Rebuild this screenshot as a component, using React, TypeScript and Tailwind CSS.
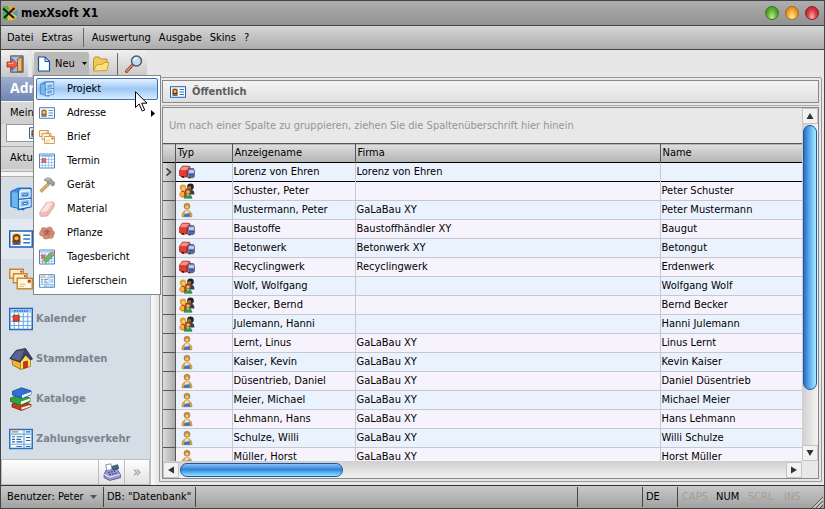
import { useState } from "react";
import type { ReactNode } from "react";

type IconProps = { className?: string };

function Svg({ className = "size-4", box = 16, children }: IconProps & { box?: number; children: ReactNode }) {
  return (
    <svg className={`${className} shrink-0`} viewBox={`0 0 ${box} ${box}`} fill="none" aria-hidden="true">
      {children}
    </svg>
  );
}

function CabinetIcon({ className }: IconProps) {
  return (
    <Svg className={className}>
      <path d="M1.200 3 6 .7h8.500L10 2.800V15.300L1.200 13z" fill="#3d8fe0" stroke="#1c62b5" strokeWidth=".6" />
      <path d="M2 3.300 6.200 4v10L2 12.800z" fill="#6fb5f0" />
      <path d="M6.300 2.500 7.500 1h7.200v12.200l-8.400 1.900z" fill="#bfe2fb" stroke="#1c62b5" strokeWidth=".8" />
      <path d="M7.300 3.200 14 2.500v4.300l-6.700.8zM7.300 8.900 14 8.100v4.400l-6.700 1.300z" fill="#8cc6f5" stroke="#fff" strokeWidth=".6" />
      <path d="M6.300 8.300 14.700 7.400" stroke="#1c62b5" strokeWidth=".8" />
      <path d="m9.300 4.800 3-.3v1.200l-3 .3zM9.300 10.500l3-.4v1.200l-3 .5z" fill="#fff" stroke="#1f5aa0" strokeWidth=".6" />
    </Svg>
  );
}

function CardIcon({ className }: IconProps) {
  return (
    <Svg className={className}>
      <path d="M.5 2.700h15v10.600H.5z" fill="#f6fbff" stroke="#1d60b8" />
      <path d="M2 4.200h6v7.600H2z" fill="#ffd87a" />
      <path d="M2.500 9V6.500C2.500 4 7.500 4 7.500 6.500V9l.5 1.500H2z" fill="#7a3d13" />
      <circle cx="5" cy="7.500" r="1.400" fill="#f3b976" />
      <path d="M2.200 11.800c.5-2.200 5.100-2.200 5.600 0z" fill="#28568e" />
      <path d="M9.500 5.500H14M9.500 8H14M9.500 10.500H14" stroke="#2f75c8" />
    </Svg>
  );
}

function LettersIcon({ className }: IconProps) {
  return (
    <Svg className={className}>
      <path d="M.5 1.500h9v6h-9z" fill="#fff0cc" stroke="#c78835" />
      <path d="M3 4.500h9v6H3z" fill="#fff0cc" stroke="#c78835" />
      <path d="M5.500 7.500h10v7h-10z" fill="#fff7e2" stroke="#c78835" />
      <path d="M7 11.500h4M7 13h3" stroke="#deb87a" strokeWidth=".8" />
      <path d="M12.500 8.500h2v2h-2z" fill="#d43a20" />
      <path d="M7.500 2.500h1.200v1.200H7.500zM10 5.500h1.200v1.200H10z" fill="#d43a20" />
    </Svg>
  );
}

function CalendarIcon({ className }: IconProps) {
  return (
    <Svg className={className}>
      <path d="M.5 1h15v14H.5z" fill="#fff" stroke="#2467b8" />
      <path d="M1 1.500h14v2.300H1z" fill="#8fc4f4" />
      <path d="M3.500 2.700h9" stroke="#2b6fbf" strokeDasharray="1 .6" />
      <path d="M1 6.500h14M1 9.500h14M1 12.300h14M3.500 4v11M6.500 4v11M9.500 4v11M12.500 4v11" stroke="#67a8e6" strokeWidth=".7" />
      <path d="M2.800 5.500h4v4h-4z" fill="#e0452b" stroke="#8f2515" strokeWidth=".5" />
    </Svg>
  );
}

function HammerIcon({ className }: IconProps) {
  return (
    <Svg className={className}>
      <path d="M9 5.500.800 13.300 2.700 15.500 11 7.500z" fill="#d9973f" stroke="#8c561d" strokeWidth=".6" />
      <path d="M5 3C7.500.2 10.500.5 12.300 2l1.200 2 2.200 1.500-.5 2.700-2.200.8-1.500-2.500L9.500 7 7.500 4.200z" fill="#8a8785" stroke="#55504c" strokeWidth=".6" />
      <path d="M7 2.800c1.500-1.200 3-1 4.300 0" stroke="#d9d9d9" strokeWidth=".8" />
    </Svg>
  );
}

function MaterialIcon({ className }: IconProps) {
  return (
    <Svg className={className}>
      <path d="M7.500 1.500 14 .8l1.500 1.700-.5 3.500-6.500 9-6.500.5-1.300-2 .3-2.500z" fill="#eeb0a8" stroke="#c08077" strokeWidth=".7" />
      <path d="m8 1.800 6-.4-6.300 9.300-6.300.5z" fill="#fcdad5" />
      <path d="m7.700 10.800.8 3.500" stroke="#d59a92" strokeWidth=".7" />
    </Svg>
  );
}

function FlowerIcon({ className }: IconProps) {
  return (
    <Svg className={className}>
      <g fill="#cf7352" stroke="#9a4a34" strokeWidth=".5">
        <ellipse cx="5" cy="5" rx="3" ry="2.500" />
        <ellipse cx="10.500" cy="4.500" rx="3" ry="2.500" />
        <ellipse cx="13" cy="8" rx="2.500" ry="2.500" />
        <ellipse cx="11.500" cy="11" rx="3" ry="2.500" />
        <ellipse cx="7" cy="12" rx="3" ry="2" />
        <ellipse cx="3.200" cy="8.500" rx="2.700" ry="2.700" />
      </g>
      <circle cx="8" cy="7.800" r="3.500" fill="#b8583f" />
      <path d="M5.500 7c1-1.500 3.500-2 5 0M8 5v4M6 9.500l4-3" stroke="#7b2f22" strokeWidth=".8" />
    </Svg>
  );
}

function ReportIcon({ className }: IconProps) {
  return (
    <Svg className={className}>
      <path d="M.5 1h15v14H.5z" fill="#eef7ff" stroke="#2467b8" />
      <path d="M1 1.500h14v2H1z" fill="#8fc4f4" />
      <path d="M1 6.500h14M1 9.500h14M1 12.300h14M3.500 4v11M6.500 4v11M9.500 4v11M12.500 4v11" stroke="#67a8e6" strokeWidth=".7" />
      <path d="M2 5.500h4v4H2z" fill="#e0452b" />
      <path d="m4 11 7.500-7.500L14.700 6.500l-8 7.700-3.200.8z" fill="#4ba545" stroke="#23682a" strokeWidth=".6" />
      <path d="m11.500 3.500 1.500-1.500 3 2.700L14.700 6.500z" fill="#e86a4a" />
      <path d="m4 11 2.700 3.200-3.200.8z" fill="#f3c894" />
    </Svg>
  );
}

function FormIcon({ className }: IconProps) {
  return (
    <Svg className={className}>
      <path d="M.5 1.700h15v12.600H.5z" fill="#f8fcff" stroke="#2d70bd" />
      <path d="M10 2v12M1 4.700h14M1 11.500h14" stroke="#6aa9e3" strokeWidth=".8" />
      <path d="M1.800 3.200h4.500" stroke="#e79b4b" strokeWidth="1.200" />
      <path d="M11.300 3.200h3M2 6.500h2M5 6.500h4M2 8.200h2M5 8.200h3M2 9.900h2M5 9.900h4M11.300 7h3M11.300 9h3M5 13h3.500M11.300 13h3" stroke="#2b65a8" strokeWidth=".8" />
    </Svg>
  );
}

function HouseIcon({ className }: IconProps) {
  return (
    <Svg className={className} box={24}>
      <path d="M3 11.500 12 9v13.500L3.500 18z" fill="#f0b52c" stroke="#8a6414" strokeWidth=".8" />
      <path d="M11.500 14.500 17 8l4.500 5v6.500l-10 3z" fill="#ffe04f" stroke="#9c7419" strokeWidth=".7" />
      <path d="M14.500 15 18.500 14v6.200l-4 1.300z" fill="#d0311c" stroke="#811d10" strokeWidth=".6" />
      <path d="M.8 11.500 7 3.500l9.500-2 7 10.500-1.800 1-5.200-5.300-5.500 7.500z" fill="#3e4368" stroke="#1f2345" strokeWidth=".8" />
      <path d="M2 11.200 7.500 4.300l8-1.600-4.700 11z" fill="#5d648f" />
    </Svg>
  );
}

function BooksIcon({ className }: IconProps) {
  return (
    <Svg className={className} box={24}>
      <path d="m3 17 10-3 9 3.500v2L12.500 23.500 3 20z" fill="#c93822" stroke="#74180d" strokeWidth=".7" />
      <path d="m12.500 20.500 9-2.500v1.500l-9 3.200z" fill="#fff3e6" />
      <path d="m1.500 11 9-3 10.500 3v3.500l-9.500 4-10-4z" fill="#2fa33c" stroke="#125f1d" strokeWidth=".7" />
      <path d="m12 14.500 9-3v2l-9 4z" fill="#f3fff0" />
      <path d="m3.500 4.200 9-3.400 9.500 3v3.700l-9 4L3.500 8z" fill="#2f6fd0" stroke="#123e8a" strokeWidth=".7" />
      <path d="m13 8.200 9-3.200v2.200l-9 4z" fill="#f2f8ff" />
    </Svg>
  );
}

function RegisterIcon({ className }: IconProps) {
  return (
    <Svg className={className}>
      <path d="m1 10 2-4 9-1 3.500 5v3L6 15.500 1 13z" fill="#9a9ad2" stroke="#47477e" strokeWidth=".7" />
      <path d="m1 10 5 2.500 9.500-2.500" stroke="#dcdcf5" />
      <path d="M2.500 1.500 7 .8l1 5-4.500 1z" fill="#fff" stroke="#5e5e8c" strokeWidth=".6" />
      <path d="m8 3 5-1.500L14 5 9 6z" fill="#41668c" stroke="#28324f" strokeWidth=".6" />
      <path d="m4.500 8.500 7-1.500M5.500 10.300l7.500-1.500" stroke="#3b3b6b" strokeDasharray="1.500 1" />
    </Svg>
  );
}

function TruckIcon() {
  return (
    <Svg>
      <path d="M.3 6.500 3.500 2l7 .3 1 2.500-2 8-5 .5L.3 11.500z" fill="#e53c2b" stroke="#8f1c14" strokeWidth=".6" />
      <path d="M1 6 3.800 2.600l6.200.3L7.500 6.300z" fill="#f6948a" />
      <path d="M7.500 6.300V12.800" stroke="#a3241a" strokeWidth=".6" />
      <path d="M8.500 6.500 10.500 4.500h4l1.200 2.500v5l-1.500 1.700H9.500l-1-1z" fill="#6f7fb4" stroke="#343d68" strokeWidth=".6" />
      <path d="M10 6.300h5v2.500h-5z" fill="#c3d6f2" />
      <path d="M10 10.500h5M10 12h5" stroke="#343d68" strokeWidth=".7" />
      <path d="M2 12h3v1.800H3zM9.500 13h2v1.300h-2z" fill="#2c2424" />
    </Svg>
  );
}

function GroupIcon() {
  return (
    <Svg>
      <circle cx="11.500" cy="3.700" r="3.300" fill="#222227" />
      <circle cx="10.500" cy="4.800" r="1.800" fill="#a86b38" />
      <path d="M8.500 10c0-4.500 6.800-4.500 6.800 0v1.500H8.500z" fill="#353c58" />
      <circle cx="4" cy="4.800" r="3.200" fill="#dfa623" />
      <circle cx="4.500" cy="5.500" r="1.700" fill="#f4c98a" />
      <path d="M.5 12.500C0 6.500 7 6.500 7.500 11v2.500L3 14.500z" fill="#d63b22" />
      <path d="M1.200 9H5v4.500H1.200z" fill="#f0b729" />
      <circle cx="9" cy="8.300" r="3" fill="#8b4c16" />
      <circle cx="9" cy="9" r="1.700" fill="#efb271" />
      <path d="M5.200 15.300c0-5 7.800-5 7.800 0z" fill="#2fa03c" stroke="#17661f" strokeWidth=".5" />
      <path d="m8 11.500 1 1.500 1-1.500z" fill="#fff" />
    </Svg>
  );
}

function PersonIcon() {
  return (
    <Svg>
      <circle cx="8" cy="4.200" r="3" fill="#cb8f33" stroke="#8f651f" strokeWidth=".5" />
      <circle cx="8" cy="5" r="1.600" fill="#f2c68d" />
      <path d="M3 14.800C2.500 6 13.500 6 13 14.800z" fill="#e3a538" stroke="#a8741d" strokeWidth=".5" />
      <path d="M6.500 8.500h3l.8 3.500H5.700z" fill="#f1dfc0" />
      <path d="m5.500 12 5-1 .8 3.800H4.700z" fill="#3278cf" />
    </Svg>
  );
}

function LogoIcon() {
  return (
    <Svg>
      <path d="M1 1h7L5.500 8 8 15H1z" fill="#4fb04c" />
      <path d="M5.500.8h5.300l4.500 4V8L11 9z" fill="#f2a43a" />
      <path d="M5 8 11 7.500 15.300 8v3.300l-4.500 4H6z" fill="#e8c53c" />
      <path d="m10 8 5.700-3.500v7.500z" fill="#4c9ad0" />
      <path d="m1 3.500 11 9.500M12.500 3 2 13" stroke="#1c1c1c" strokeWidth="2.200" />
    </Svg>
  );
}

function DoorIcon() {
  return (
    <Svg className="size-[18px]" box={18}>
      <path d="M4.500.8h12.700v16.500H4.500z" fill="#5c9fe0" stroke="#8f5f3f" />
      <path d="M6 2h7v14H6z" fill="#8fc6f7" />
      <path d="m11.500 4 4.500-2v14l-4.500.8z" fill="#f4b765" stroke="#7a4630" strokeWidth=".8" />
      <path d="M1 7h5V3.700L12 9.500 6 15.200V12H1z" fill="#ef5b45" stroke="#a02d1f" strokeWidth=".8" />
      <path d="M2 8.300h5V6.500" stroke="#fbb3a6" />
    </Svg>
  );
}

function FileIcon() {
  return (
    <Svg>
      <path d="M2.500 1h6.500l4.500 4.500V15h-11z" fill="#fafdff" stroke="#1e4f9e" strokeWidth="1.200" />
      <path d="M9 1v4.500h4.500z" fill="#b5d7f7" stroke="#1e4f9e" />
    </Svg>
  );
}

function FolderIcon() {
  return (
    <Svg className="size-[18px]" box={18}>
      <path d="M1.500 16V4l1.500-2h4l1.500 2H15v5" fill="#f2c657" stroke="#c2932d" />
      <path d="m1.500 16 3-6L11 9l1-1.500h5L15 15.500z" fill="#fbdf82" stroke="#c9992f" strokeWidth=".9" />
    </Svg>
  );
}

function SearchIcon() {
  return (
    <Svg className="size-[18px]" box={18}>
      <path d="m1.500 16.500 6-6.500" stroke="#8f3528" strokeWidth="3" strokeLinecap="round" />
      <path d="m1.700 16.200 6-6.400" stroke="#ea8a78" strokeWidth="1.500" strokeLinecap="round" />
      <circle cx="11.500" cy="6" r="5" fill="#c3daf4" stroke="#56596a" strokeWidth="1.500" />
      <path d="M8.800 5.500c.5-1.800 2-2.500 3.500-2.300" stroke="#fff" strokeWidth="1.400" />
    </Svg>
  );
}

const menuItems = [
  { label: "Projekt", Icon: CabinetIcon },
  { label: "Adresse", Icon: CardIcon, submenu: true },
  { label: "Brief", Icon: LettersIcon },
  { label: "Termin", Icon: CalendarIcon },
  { label: "Gerät", Icon: HammerIcon },
  { label: "Material", Icon: MaterialIcon },
  { label: "Pflanze", Icon: FlowerIcon },
  { label: "Tagesbericht", Icon: ReportIcon },
  { label: "Lieferschein", Icon: FormIcon },
];

const navItems = [
  { id: "projekt", label: "", Icon: CabinetIcon },
  { id: "adresse", label: "", Icon: CardIcon, active: true },
  { id: "brief", label: "", Icon: LettersIcon },
  { id: "kalender", label: "Kalender", Icon: CalendarIcon },
  { id: "stammdaten", label: "Stammdaten", Icon: HouseIcon },
  { id: "kataloge", label: "Kataloge", Icon: BooksIcon },
  { id: "zahlung", label: "Zahlungsverkehr", Icon: FormIcon },
];

const typeIcons = { truck: TruckIcon, group: GroupIcon, person: PersonIcon };

const rows: Array<{ type: keyof typeof typeIcons; display: string; company: string; name: string }> = [
  { type: "truck", display: "Lorenz von Ehren", company: "Lorenz von Ehren", name: "" },
  { type: "group", display: "Schuster, Peter", company: "", name: "Peter Schuster" },
  { type: "person", display: "Mustermann, Peter", company: "GaLaBau XY", name: "Peter Mustermann" },
  { type: "truck", display: "Baustoffe", company: "Baustoffhändler XY", name: "Baugut" },
  { type: "truck", display: "Betonwerk", company: "Betonwerk XY", name: "Betongut" },
  { type: "truck", display: "Recyclingwerk", company: "Recyclingwerk", name: "Erdenwerk" },
  { type: "group", display: "Wolf, Wolfgang", company: "", name: "Wolfgang Wolf" },
  { type: "group", display: "Becker, Bernd", company: "", name: "Bernd Becker" },
  { type: "group", display: "Julemann, Hanni", company: "", name: "Hanni Julemann" },
  { type: "person", display: "Lernt, Linus", company: "GaLaBau XY", name: "Linus Lernt" },
  { type: "person", display: "Kaiser, Kevin", company: "GaLaBau XY", name: "Kevin Kaiser" },
  { type: "person", display: "Düsentrieb, Daniel", company: "GaLaBau XY", name: "Daniel Düsentrieb" },
  { type: "person", display: "Meier, Michael", company: "GaLaBau XY", name: "Michael Meier" },
  { type: "person", display: "Lehmann, Hans", company: "GaLaBau XY", name: "Hans Lehmann" },
  { type: "person", display: "Schulze, Willi", company: "GaLaBau XY", name: "Willi Schulze" },
  { type: "person", display: "Müller, Horst", company: "GaLaBau XY", name: "Horst Müller" },
];

function ArrowButton({ label, path }: { label: string; path: string }) {
  return (
    <button
      type="button"
      aria-label={label}
      className="flex size-4 shrink-0 items-center justify-center border border-[#c4c4c4] bg-[#f2f2f2]"
    >
      <svg className="size-2" viewBox="0 0 8 8" aria-hidden="true">
        <path d={path} fill="#333" />
      </svg>
    </button>
  );
}

function NewMenu() {
  const [active, setActive] = useState("Projekt");

  return (
    <div
      role="menu"
      className="absolute top-full -left-px z-20 w-32 border border-[#858585] bg-white p-px"
    >
      {menuItems.map(({ label, Icon, submenu }) => (
        <button
          key={label}
          type="button"
          role="menuitem"
          onMouseEnter={() => setActive(label)}
          className="relative flex h-6 w-full items-center p-px text-left"
        >
          <span
            className={
              active === label
                ? "flex h-full w-full items-center gap-3 rounded-xs border border-[#3f6fb0] bg-linear-to-b from-[#e4f1fe] via-[#9cc8f5] to-[#d9ecff] px-0.5"
                : "flex h-full w-full items-center gap-3 border border-transparent px-0.5"
            }
          >
            <Icon className="size-4 opacity-80" />
            {label}
          </span>
          {submenu && (
            <svg className="absolute right-1 h-[7px] w-1" viewBox="0 0 4 7" aria-hidden="true">
              <path d="M0 0v7l4-3.500z" fill="#000" />
            </svg>
          )}
        </button>
      ))}
      {/* mouse pointer */}
      <svg className="absolute top-[15px] left-[101px] h-[21px] w-[13px]" viewBox="0 0 13 21" aria-hidden="true">
        <path
          d="M.5.800v15.700l3.700-3.500 3 7 2.500-1-3-6.800h5.300z"
          fill="#fff"
          stroke="#000"
        />
      </svg>
    </div>
  );
}

function Sidebar() {
  return (
    <aside className="flex w-[150px] shrink-0 flex-col border-r border-[#b9bec5] bg-[#d5dde6]">
      <h2 className="h-6 shrink-0 bg-linear-to-b from-[#a0afd0] to-[#6f84b4] pl-[9px] font-['Open_Sans',sans-serif] text-sm leading-[22px] font-bold text-white">
        Adresse
      </h2>
      <div className="flex h-[78px] shrink-0 flex-col bg-[#dcdcdc]">
        <button type="button" className="h-[23px] border-t border-[#f8f8f8] bg-linear-to-b from-[#d9d9d9] to-[#cfcfcf] pl-[9px] text-left">
          Meine
        </button>
        <button type="button" aria-label="Öffentlich" className="mx-[5px] flex h-[18px] items-center border border-[#999] bg-white pl-[22px]">
          <CardIcon className="size-4" />
        </button>
        <button type="button" className="mt-1 h-[23px] border-t border-[#aaa] bg-linear-to-b from-[#d9d9d9] to-[#c9c9c9] pl-[9px] text-left">
          Aktuell
        </button>
        <div className="mt-0.5 h-[6px] border-y border-[#b0b0b0] bg-[#f6f6f6]" />
      </div>
      <nav className="flex min-h-0 flex-1 flex-col overflow-hidden">
        {navItems.map(({ id, label, Icon, active }) => (
          <a
            key={id}
            href={`#${id}`}
            className={
              active
                ? "flex h-10 shrink-0 items-center gap-[3px] bg-[#e2e8ef] pl-2 font-bold text-[#7b848d]"
                : "flex h-10 shrink-0 items-center gap-[3px] pl-2 font-bold text-[#7b848d]"
            }
          >
            <Icon className="size-6" />
            {label}
          </a>
        ))}
      </nav>
      <div className="flex h-[26px] shrink-0 border border-[#c0c0c0] bg-linear-to-b from-white to-[#e2e2e2]">
        <span className="flex-1" />
        <button type="button" aria-label="Kasse" className="flex w-[26px] items-center justify-center border-l border-[#bdbdbd]">
          <RegisterIcon className="size-[18px]" />
        </button>
        <button type="button" className="w-[25px] border-l border-[#bdbdbd] text-base text-[#999]">
          »
        </button>
      </div>
    </aside>
  );
}

function AddressTable() {
  return (
    <table className="w-full table-fixed border-collapse">
      <colgroup>
        <col className="w-3" />
        <col className="w-[57px]" />
        <col className="w-[123px]" />
        <col />
        <col className="w-[142px]" />
      </colgroup>
      <thead>
        <tr className="h-[19px] border-t border-b border-t-[#555] border-b-black bg-linear-to-b from-[#dedede] to-[#b4b4b4] text-left">
          <th className="border-r border-[#555] p-0" aria-label="Zeile" />
          {["Typ", "Anzeigename", "Firma", "Name"].map((title) => (
            <th key={title} className="border-r border-[#555] p-0 pl-0.5 font-normal last:border-r-0">
              {title}
            </th>
          ))}
        </tr>
      </thead>
      <tbody>
        {rows.map((row, index) => {
          const TypeIcon = typeIcons[row.type];
          return (
            <tr
              key={row.display}
              className={
                index === 0
                  ? "h-[19px] border-b border-black bg-[#eaf2fd]"
                  : "h-[19px] border-b border-[#c6c8d2] odd:bg-[#eaf2fd] even:bg-[#f7f3fd]"
              }
            >
              <td className="border-r border-b border-[#555] bg-linear-to-r from-[#dcdcdc] to-[#ababab] p-0">
                {index === 0 && (
                  <svg className="mx-auto h-2 w-[7px]" viewBox="0 0 7 8" fill="none" aria-hidden="true">
                    <path d="m1.500.5 4 3.500-4 3.500" stroke="#333" strokeWidth="1.500" />
                  </svg>
                )}
              </td>
              <td className="border-r border-r-[#c6c8d2] p-0 pl-[3px]">
                <TypeIcon />
              </td>
              <td className="truncate border-r border-r-[#c6c8d2] p-0 pl-px">{row.display}</td>
              <td className="truncate border-r border-r-[#c6c8d2] p-0 pl-px">{row.company}</td>
              <td className="truncate p-0 pl-px">{row.name}</td>
            </tr>
          );
        })}
      </tbody>
    </table>
  );
}

function AddressGrid() {
  return (
    <div className="flex min-h-0 flex-1 flex-col border border-[#888]">
      <div className="flex min-h-0 flex-1">
        <div className="min-w-0 flex-1 overflow-hidden">
          <p className="flex h-[35px] items-center pl-1.5 text-[#959595]">
            Um nach einer Spalte zu gruppieren, ziehen Sie die Spaltenüberschrift hier hinein
          </p>
          <AddressTable />
        </div>
        <div className="flex w-4 shrink-0 flex-col bg-linear-to-r from-[#cfcfcf] to-[#f4f4f4]">
          <ArrowButton label="Nach oben" path="M4 1 7.500 7h-7z" />
          <div className="flex min-h-0 flex-1 flex-col py-px">
            <div className="mx-px h-[83%] rounded-full border border-[#24559b] bg-linear-to-r from-[#2c6fc4] via-[#63b0f2] via-50% to-[#a8ecff]" />
          </div>
          <ArrowButton label="Nach unten" path="M4 7 7.500 1h-7z" />
        </div>
      </div>
      <div className="flex h-[17px] shrink-0">
        <div className="flex min-w-0 flex-1 items-center bg-linear-to-b from-[#cfcfcf] to-[#f2f2f2]">
          <ArrowButton label="Nach links" path="M1 4 7 .500v7z" />
          <div className="min-w-0 flex-1 px-px">
            <div className="h-3.5 w-[27%] rounded-full border border-[#24559b] bg-linear-to-b from-[#8cc4f4] via-[#2f80dc] via-45% to-[#90e4ff]" />
          </div>
          <ArrowButton label="Nach rechts" path="M7 4 1 .500v7z" />
        </div>
        <div className="w-4 shrink-0 bg-[#e8e8e8]" />
      </div>
    </div>
  );
}

function Toolbar() {
  const [open, setOpen] = useState(true);

  return (
    <div className="flex h-[27px] shrink-0 bg-[#e7e7e7]">
      <div className="flex w-[27px] items-center justify-center bg-linear-to-b from-[#f0f0f0] to-[#c8c8c8]">
        <button type="button" aria-label="Beenden">
          <DoorIcon />
        </button>
      </div>
      <div className="ml-1 flex w-[115px] items-center bg-linear-to-b from-[#f0f0f0] to-[#c8c8c8] pl-0.5">
        <div className="relative">
          <button
            type="button"
            onClick={() => setOpen(!open)}
            className="flex h-[23px] w-[55px] items-center rounded-xs bg-[#b9b9b9] pl-0.5"
          >
            <FileIcon />
            <span className="ml-[3px]">Neu</span>
            <svg className="ml-[7px] h-[3px] w-[5px]" viewBox="0 0 5 3" aria-hidden="true">
              <path d="M0 0h5L2.500 3z" fill="#000" />
            </svg>
          </button>
          {open && <NewMenu />}
        </div>
        <button type="button" aria-label="Öffnen" className="ml-[3px]">
          <FolderIcon />
        </button>
        <span className="mx-[7px] h-[22px] w-px bg-[#666]" />
        <button type="button" aria-label="Suchen">
          <SearchIcon />
        </button>
      </div>
    </div>
  );
}

function StatusBar() {
  return (
    <footer className="flex h-[23px] shrink-0 items-center border-t border-[#333] bg-linear-to-b from-[#c9c9c9] to-[#a2a2a2]">
      <button type="button" className="flex h-5 w-[103px] items-center justify-between border-r border-[#444] px-1.5">
        Benutzer: Peter
        <svg className="h-1 w-[7px]" viewBox="0 0 7 4" aria-hidden="true">
          <path d="M0 0h7L3.500 4z" fill="#555" />
        </svg>
      </button>
      <span className="flex h-5 w-[92px] items-center border-r border-[#444] pl-[3px] whitespace-nowrap">DB: "Datenbank"</span>
      <span className="h-5 flex-1 border-r border-[#444]" />
      <span className="h-5 w-[65px] border-r border-[#444]" />
      <span className="flex h-5 w-[35px] items-center border-r border-[#444] pl-[3px]">DE</span>
      <span className="w-[38px] pl-1 text-[#a59f94]">CAPS</span>
      <span className="w-8">NUM</span>
      <span className="w-9 text-[#a59f94]">SCRL</span>
      <span className="w-[27px] text-[#a59f94]">INS</span>
      <svg className="mr-px size-3 self-end" viewBox="0 0 12 12" aria-hidden="true">
        <path d="M1 12 12 1M5 12l7-7M9 12l3-3" stroke="#555" />
        <path d="M2.500 12 12 2.500M6.500 12 12 6.500" stroke="#eee" />
      </svg>
    </footer>
  );
}

export default function App() {
  return (
    <div className="flex h-screen flex-col overflow-hidden border border-[#444] bg-[#e8e8e8] font-['DejaVu_Sans_Condensed','DejaVu_Sans',sans-serif] text-[11px] leading-[14px] text-black">
      <header className="flex h-[25px] shrink-0 items-center border-b border-[#444] bg-linear-to-b from-[#aeaeae] to-[#929292] pl-px">
        <LogoIcon />
        <h1 className="ml-[3px] flex-1 text-xs font-bold">mexXsoft X1</h1>
        <div className="flex gap-1.5 pr-[5px]">
          <button type="button" aria-label="Minimieren" className="size-3.5 rounded-full border border-[#3e7520] bg-radial-[at_50%_85%] from-[#b6f58a] via-[#62b536] to-[#35761a]" />
          <button type="button" aria-label="Maximieren" className="size-3.5 rounded-full border border-[#a66a18] bg-radial-[at_50%_85%] from-[#fff08a] via-[#f4aa35] to-[#b8661a]" />
          <button type="button" aria-label="Schließen" className="size-3.5 rounded-full border border-[#8f2026] bg-radial-[at_50%_85%] from-[#ffb0b0] via-[#dc3d46] to-[#8c1820]" />
        </div>
      </header>

      <nav className="flex h-6 shrink-0 items-center border-b border-[#444] bg-linear-to-b from-[#d6d6d6] to-[#acacac] pl-1.5">
        <button type="button">Datei</button>
        <button type="button" className="ml-2">Extras</button>
        <span className="mr-1.5 ml-2.5 h-[19px] w-px bg-[#666]" />
        <button type="button" className="ml-0.5">Auswertung</button>
        <button type="button" className="ml-2">Ausgabe</button>
        <button type="button" className="ml-2">Skins</button>
        <button type="button" className="ml-2">?</button>
      </nav>

      <Toolbar />

      <div className="flex min-h-0 flex-1">
        <Sidebar />
        <div className="w-2 shrink-0 bg-linear-to-r from-[#fafafa] to-[#e4e4e4]" />
        <main className="mr-0.5 mb-[3px] flex min-w-0 flex-1 flex-col rounded-t-xs border border-[#999] p-0.5">
          <div className="flex h-[23px] shrink-0 items-center gap-1.5 border border-[#888] bg-linear-to-b from-[#f4f4f4] to-[#dfdfdf] pl-[7px]">
            <CardIcon className="size-4" />
            <h2 className="font-bold text-[#5c5c5c]">Öffentlich</h2>
          </div>
          <div className="mt-0.5 flex min-h-0 flex-1 flex-col border-t border-[#aaa] pt-px">
            <AddressGrid />
          </div>
        </main>
      </div>

      <StatusBar />
    </div>
  );
}
